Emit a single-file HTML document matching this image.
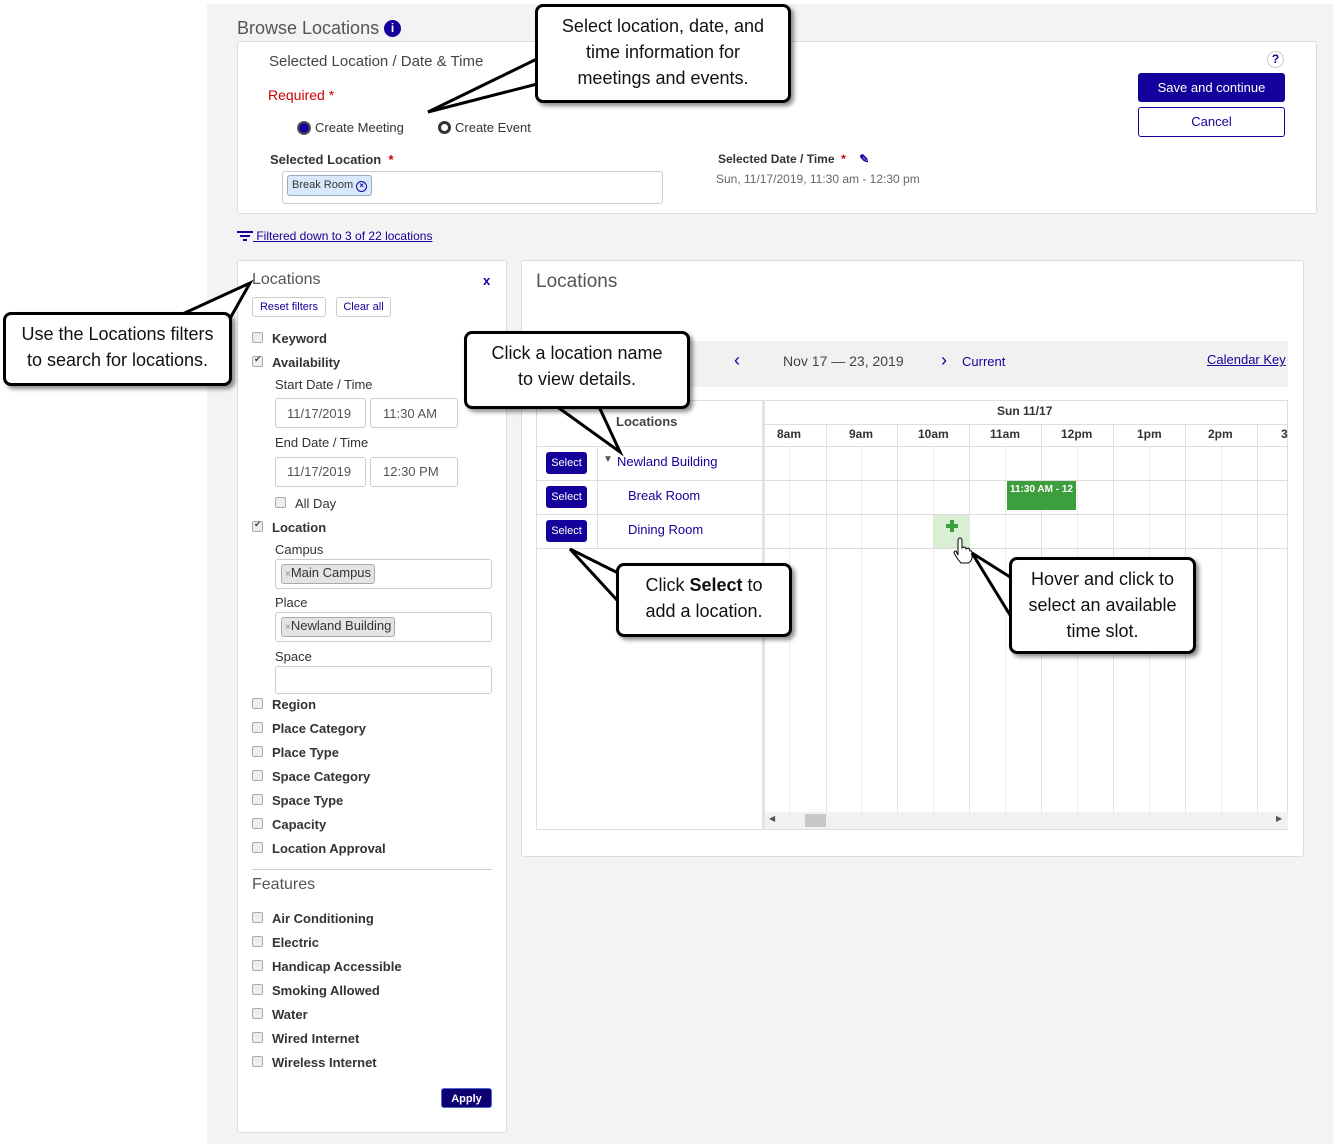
<!DOCTYPE html>
<html><head><meta charset="utf-8"><style>
*{box-sizing:border-box;margin:0;padding:0}
body{width:1333px;height:1144px;position:relative;background:#fff;font-family:"Liberation Sans",Arial,sans-serif;font-size:13px;color:#333;overflow:hidden}
.a{position:absolute;white-space:nowrap}
.bg{position:absolute;left:207px;top:4px;width:1126px;height:1140px;background:#f3f3f3}
.panel{position:absolute;background:#fff;border:1px solid #ddd;border-radius:3px}
.lt{font-weight:300;color:#555}
.b{font-weight:bold}
.cb{position:absolute;width:11px;height:11px;border:1px solid #aaa;border-radius:2px;background:#eee}
.cb.on::after{content:"✔";position:absolute;left:1px;top:-3px;font-size:9px;color:#444}
.inp{position:absolute;border:1px solid #ccc;border-radius:3px;background:#fff}
.tag{position:absolute;background:#e4e4e4;border:1px solid #aaa;border-radius:3px;font-size:13px;padding:0 3px;color:#333;line-height:16px}
.btn{position:absolute;background:#14009a;color:#fff;font-size:11px;border-radius:3px;text-align:center}
.co{position:absolute;background:#fff;border:3px solid #000;border-radius:8px;box-shadow:3px 3px 4px rgba(0,0,0,.45);text-align:center;font-size:18px;line-height:26px;color:#111;z-index:5}
svg{position:absolute;left:0;top:0;z-index:4}
.blue{color:#14009a}
</style></head><body>
<div class="bg"></div>
<div class="a lt" style="left:237px;top:18px;font-size:18px;color:#555">Browse Locations <span style="display:inline-block;width:17px;height:17px;border-radius:50%;background:#14009a;color:#fff;font-size:12px;font-weight:bold;text-align:center;line-height:17px;vertical-align:2px">i</span></div>

<div class="panel" style="left:237px;top:41px;width:1080px;height:173px"></div>
<div class="a" style="left:269px;top:53px;font-size:15px;color:#444">Selected Location / Date &amp; Time</div>
<div class="a" style="left:268px;top:87px;font-size:14px;color:#c00">Required <span style="color:#c00">*</span></div>
<div class="a" style="left:297px;top:121px;width:14px;height:14px;border-radius:50%;background:#14009a;border:2px solid #555"></div>
<div class="a" style="left:315px;top:120px;font-size:13px">Create Meeting</div>
<div class="a" style="left:438px;top:121px;width:13px;height:13px;border-radius:50%;border:3px solid #333"></div>
<div class="a" style="left:455px;top:120px;font-size:13px">Create Event</div>
<div class="a b" style="left:270px;top:152px;font-size:13px">Selected Location <span style="color:#c00">&nbsp;*</span></div>
<div class="inp" style="left:282px;top:171px;width:381px;height:33px"></div>
<div class="a" style="left:287px;top:175px;height:21px;padding:0 4px;background:#d7e9fb;border:1px solid #9ab;border-radius:3px;font-size:11px;line-height:19px">Break Room <span style="display:inline-block;width:11px;height:11px;border:1.5px solid #14009a;border-radius:50%;font-size:8px;line-height:8px;text-align:center;color:#14009a;font-weight:bold">×</span></div>
<div class="a b" style="left:718px;top:152px;font-size:12px">Selected Date / Time <span style="color:#c00">&nbsp;*</span> <span class="blue" style="margin-left:10px">✎</span></div>
<div class="a" style="left:716px;top:172px;font-size:12px;color:#666">Sun, 11/17/2019, 11:30 am - 12:30 pm</div>
<div class="a" style="left:1267px;top:51px;width:17px;height:17px;border-radius:50%;border:1px solid #ccc;color:#14009a;font-weight:bold;font-size:12px;text-align:center;line-height:15px">?</div>
<div class="btn" style="left:1138px;top:73px;width:147px;height:29px;font-size:13px;line-height:29px">Save and continue</div>
<div class="a" style="left:1138px;top:107px;width:147px;height:30px;border:1px solid #14009a;border-radius:3px;text-align:center;line-height:28px;color:#14009a;font-size:13px;background:#fff">Cancel</div>

<div class="a" style="left:237px;top:229px;font-size:12px;color:#14009a;text-decoration:underline"><span style="text-decoration:none;display:inline-block;width:16px;vertical-align:-1px;line-height:4px"><span style="display:block;height:2px;width:16px;background:#14009a;margin-bottom:2px"></span><span style="display:block;height:2px;width:10px;margin-left:3px;background:#14009a;margin-bottom:2px"></span><span style="display:block;height:2px;width:4px;margin-left:6px;background:#14009a"></span></span> Filtered down to 3 of 22 locations</div>

<div class="panel" style="left:237px;top:260px;width:270px;height:873px"></div>
<div class="a lt" style="left:252px;top:271px;font-size:16px">Locations</div>
<div class="a b blue" style="left:483px;top:273px;font-size:13px">x</div>
<div class="a blue" style="left:252px;top:297px;width:74px;height:20px;border:1px solid #ccc;border-radius:3px;font-size:11px;text-align:center;line-height:18px">Reset filters</div>
<div class="a blue" style="left:336px;top:297px;width:55px;height:20px;border:1px solid #ccc;border-radius:3px;font-size:11px;text-align:center;line-height:18px">Clear all</div>

<div class="cb" style="left:252px;top:332px"></div><div class="a b" style="left:272px;top:331px">Keyword</div>
<div class="cb on" style="left:252px;top:356px"></div><div class="a b" style="left:272px;top:355px">Availability</div>
<div class="a" style="left:275px;top:377px;font-size:13px">Start Date / Time</div>
<div class="inp" style="left:275px;top:398px;width:91px;height:30px"></div><div class="a" style="left:287px;top:406px;color:#555">11/17/2019</div>
<div class="inp" style="left:370px;top:398px;width:88px;height:30px"></div><div class="a" style="left:383px;top:406px;color:#555">11:30 AM</div>
<div class="a" style="left:275px;top:435px;font-size:13px">End Date / Time</div>
<div class="inp" style="left:275px;top:457px;width:91px;height:30px"></div><div class="a" style="left:287px;top:464px;color:#555">11/17/2019</div>
<div class="inp" style="left:370px;top:457px;width:88px;height:30px"></div><div class="a" style="left:383px;top:464px;color:#555">12:30 PM</div>
<div class="cb" style="left:275px;top:497px"></div><div class="a" style="left:295px;top:496px">All Day</div>
<div class="cb on" style="left:252px;top:521px"></div><div class="a b" style="left:272px;top:520px">Location</div>
<div class="a" style="left:275px;top:542px">Campus</div>
<div class="inp" style="left:275px;top:559px;width:217px;height:30px"></div><div class="tag" style="left:281px;top:564px"><span style="color:#888;font-size:10px">×</span>Main Campus</div>
<div class="a" style="left:275px;top:595px">Place</div>
<div class="inp" style="left:275px;top:612px;width:217px;height:30px"></div><div class="tag" style="left:281px;top:617px"><span style="color:#888;font-size:10px">×</span>Newland Building</div>
<div class="a" style="left:275px;top:649px">Space</div>
<div class="inp" style="left:275px;top:666px;width:217px;height:28px"></div>
<div class="cb" style="left:252px;top:698px"></div><div class="a b" style="left:272px;top:697px">Region</div>
<div class="cb" style="left:252px;top:722px"></div><div class="a b" style="left:272px;top:721px">Place Category</div>
<div class="cb" style="left:252px;top:746px"></div><div class="a b" style="left:272px;top:745px">Place Type</div>
<div class="cb" style="left:252px;top:770px"></div><div class="a b" style="left:272px;top:769px">Space Category</div>
<div class="cb" style="left:252px;top:794px"></div><div class="a b" style="left:272px;top:793px">Space Type</div>
<div class="cb" style="left:252px;top:818px"></div><div class="a b" style="left:272px;top:817px">Capacity</div>
<div class="cb" style="left:252px;top:842px"></div><div class="a b" style="left:272px;top:841px">Location Approval</div>
<div class="a" style="left:252px;top:869px;width:240px;height:1px;background:#ccc"></div>
<div class="a lt" style="left:252px;top:876px;font-size:16px">Features</div>
<div class="cb" style="left:252px;top:912px"></div><div class="a b" style="left:272px;top:911px">Air Conditioning</div>
<div class="cb" style="left:252px;top:936px"></div><div class="a b" style="left:272px;top:935px">Electric</div>
<div class="cb" style="left:252px;top:960px"></div><div class="a b" style="left:272px;top:959px">Handicap Accessible</div>
<div class="cb" style="left:252px;top:984px"></div><div class="a b" style="left:272px;top:983px">Smoking Allowed</div>
<div class="cb" style="left:252px;top:1008px"></div><div class="a b" style="left:272px;top:1007px">Water</div>
<div class="cb" style="left:252px;top:1032px"></div><div class="a b" style="left:272px;top:1031px">Wired Internet</div>
<div class="cb" style="left:252px;top:1056px"></div><div class="a b" style="left:272px;top:1055px">Wireless Internet</div>
<div class="btn" style="left:441px;top:1088px;width:51px;height:20px;line-height:20px;font-weight:bold;background:#0e0072;border:1px solid #4a6ad0">Apply</div>

<div class="panel" style="left:521px;top:260px;width:783px;height:597px"></div>
<div class="a lt" style="left:536px;top:271px;font-size:19px">Locations</div>
<div class="a" style="left:537px;top:341px;width:751px;height:46px;background:#f1f1f1"></div>
<div class="a blue" style="left:734px;top:350px;font-size:18px">‹</div>
<div class="a" style="left:783px;top:353px;font-size:14px;color:#444">Nov 17 — 23, 2019</div>
<div class="a blue" style="left:941px;top:350px;font-size:18px">›</div>
<div class="a blue" style="left:962px;top:354px;font-size:13px">Current</div>
<div class="a blue" style="left:1207px;top:352px;font-size:13px;text-decoration:underline">Calendar Key</div>

<div class="a" style="left:536px;top:400px;width:752px;height:430px;border:1px solid #ddd"></div>
<div class="a" style="left:762px;top:400px;width:3px;height:430px;background:#e3e3e3"></div>
<div class="a b" style="left:616px;top:414px;color:#444">Locations</div>
<div class="a b" style="left:997px;top:404px;font-size:12px;color:#333">Sun 11/17</div>
<div class="a" style="left:765px;top:424px;width:523px;height:1px;background:#ddd"></div>
<div class="a" style="left:536px;top:446px;width:752px;height:1px;background:#ddd"></div>
<div class="a" style="left:536px;top:480px;width:752px;height:1px;background:#ddd"></div>
<div class="a" style="left:536px;top:514px;width:752px;height:1px;background:#ddd"></div>
<div class="a" style="left:536px;top:548px;width:752px;height:1px;background:#ddd"></div>
<div class="a" style="left:597px;top:446px;width:1px;height:103px;background:#ddd"></div>
<div class="a" style="left:826px;top:424px;width:1px;height:388px;background:#e2e2e2"></div>
<div class="a" style="left:897px;top:424px;width:1px;height:388px;background:#e2e2e2"></div>
<div class="a" style="left:969px;top:424px;width:1px;height:388px;background:#e2e2e2"></div>
<div class="a" style="left:1041px;top:424px;width:1px;height:388px;background:#e2e2e2"></div>
<div class="a" style="left:1113px;top:424px;width:1px;height:388px;background:#e2e2e2"></div>
<div class="a" style="left:1185px;top:424px;width:1px;height:388px;background:#e2e2e2"></div>
<div class="a" style="left:1257px;top:424px;width:1px;height:388px;background:#e2e2e2"></div>
<div class="a" style="left:789px;top:447px;width:0;height:365px;border-left:1px dotted #ddd"></div>
<div class="a" style="left:861px;top:447px;width:0;height:365px;border-left:1px dotted #ddd"></div>
<div class="a" style="left:933px;top:447px;width:0;height:365px;border-left:1px dotted #ddd"></div>
<div class="a" style="left:1005px;top:447px;width:0;height:365px;border-left:1px dotted #ddd"></div>
<div class="a" style="left:1077px;top:447px;width:0;height:365px;border-left:1px dotted #ddd"></div>
<div class="a" style="left:1149px;top:447px;width:0;height:365px;border-left:1px dotted #ddd"></div>
<div class="a" style="left:1221px;top:447px;width:0;height:365px;border-left:1px dotted #ddd"></div>
<div class="a b" style="left:777px;top:427px;font-size:12px">8am</div>
<div class="a b" style="left:849px;top:427px;font-size:12px">9am</div>
<div class="a b" style="left:918px;top:427px;font-size:12px">10am</div>
<div class="a b" style="left:990px;top:427px;font-size:12px">11am</div>
<div class="a b" style="left:1061px;top:427px;font-size:12px">12pm</div>
<div class="a b" style="left:1137px;top:427px;font-size:12px">1pm</div>
<div class="a b" style="left:1208px;top:427px;font-size:12px">2pm</div>
<div class="a b" style="left:1281px;top:427px;font-size:12px">3</div>
<div class="btn" style="left:546px;top:452px;width:41px;height:22px;line-height:22px">Select</div>
<div class="btn" style="left:546px;top:486px;width:41px;height:22px;line-height:22px">Select</div>
<div class="btn" style="left:546px;top:520px;width:41px;height:22px;line-height:22px">Select</div>
<div class="a" style="left:603px;top:454px;font-size:10px;color:#555">▼</div>
<div class="a blue" style="left:617px;top:454px">Newland Building</div>
<div class="a blue" style="left:628px;top:488px">Break Room</div>
<div class="a blue" style="left:628px;top:522px">Dining Room</div>
<div class="a" style="left:1007px;top:481px;width:69px;height:29px;background:#3d9e3d;color:#fff;font-size:10px;font-weight:bold;padding:3px 0 0 3px;overflow:hidden">11:30 AM - 12</div>
<div class="a" style="left:933px;top:515px;width:36px;height:33px;background:#d9efd4"></div>
<div class="a" style="left:946px;top:524px;width:12px;height:4px;background:#3d9e3d"></div>
<div class="a" style="left:950px;top:520px;width:4px;height:12px;background:#3d9e3d"></div>
<svg width="1333" height="1144" style="z-index:3">
<path d="M958,555 L958,541 Q958,538 960,538 Q962,538 962,541 L962,548 L964,547 Q966,547 966,549 L968,548 Q970,549 970,551 Q972,550 972,553 L972,558 Q971,562 968,563 L961,563 Q959,561 957,558 L954,553 Q954,551 956,551 Z" fill="#fff" stroke="#000" stroke-width="1"/>
</svg>
<div class="a" style="left:765px;top:812px;width:523px;height:17px;background:#f1f1f1"></div>
<div class="a" style="left:805px;top:814px;width:21px;height:13px;background:#c8c8c8"></div>
<div class="a" style="left:769px;top:814px;font-size:8px;color:#555">◀</div>
<div class="a" style="left:1276px;top:814px;font-size:8px;color:#555">▶</div>

<svg width="1333" height="1144">
<g fill="#fff" stroke="#000" stroke-width="3" stroke-linejoin="miter">
<polygon points="545,82 428,112 545,55"/>
<polygon points="165,322 250,283 228,322"/>
<polygon points="545,398 620,452 595,398"/>
<polygon points="628,578 570,549 628,612"/>
<polygon points="1018,582 972,553 1018,628"/>
</g>
</svg>
<div class="co" style="left:535px;top:4px;width:256px;height:99px;padding-top:6px">Select location, date, and<br>time information for<br>meetings and events.</div>
<div class="co" style="left:3px;top:312px;width:229px;height:74px;padding-top:6px">Use the Locations filters<br>to search for locations.</div>
<div class="co" style="left:464px;top:331px;width:226px;height:78px;padding-top:6px">Click a location name<br>to view details.</div>
<div class="co" style="left:616px;top:563px;width:176px;height:74px;padding-top:6px">Click <b>Select</b> to<br>add a location.</div>
<div class="co" style="left:1009px;top:557px;width:187px;height:97px;padding-top:6px">Hover and click to<br>select an available<br>time slot.</div>
</body></html>
